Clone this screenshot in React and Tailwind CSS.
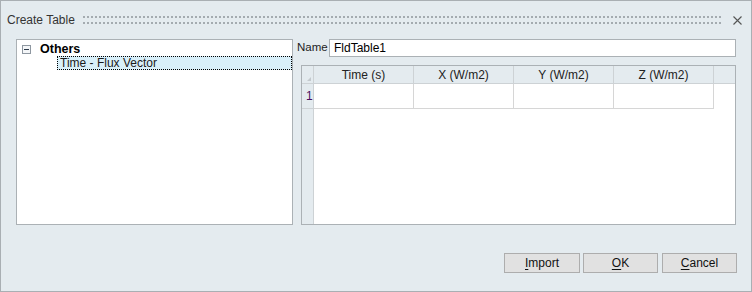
import React from "react";

const font = { fontFamily: '"Liberation Sans", Arial, sans-serif' };

const Btn = ({ mn, rest, w, ml }) => (
  <button
    className={`h-[20px] ${w} ${ml} border border-[#adadad] bg-[#e1e1e1] text-[12px] text-[#111] leading-none flex items-center justify-center`}
  >
    <span>
      <span className="underline underline-offset-2">{mn}</span>
      {rest}
    </span>
  </button>
);

const cols = ["Time (s)", "X (W/m2)", "Y (W/m2)", "Z (W/m2)"];

export default function App() {
  return (
    <div
      style={font}
      className="w-[752px] h-[292px] border border-[#a9afb3] bg-[#e4ebef] flex flex-col text-[12px] text-[#1a1a1a]"
    >
      {/* title bar */}
      <div className="h-[37px] flex items-center pl-[6px]">
        <span className="w-[76px] shrink-0 text-[#333] pt-[1px] whitespace-nowrap">Create Table</span>
        <svg className="shrink-0 mt-[1px]" width="640" height="8">
          <defs>
            <pattern id="dots" width="4" height="6" patternUnits="userSpaceOnUse">
              <rect x="0" y="0" width="2" height="2" fill="#a4abb0" />
            </pattern>
          </defs>
          <rect width="640" height="8" fill="url(#dots)" />
        </svg>
        <svg className="ml-[10px] shrink-0 mt-[1px]" width="9" height="9" viewBox="0 0 9 9">
          <path d="M0.5 0.5L8.5 8.5M8.5 0.5L0.5 8.5" stroke="#555" strokeWidth="1.1" />
        </svg>
      </div>

      {/* body */}
      <div className="flex h-[186px] mt-[1px] pl-[15px]">
        {/* tree */}
        <div className="w-[277px] h-full border border-[#abb1b5] bg-white">
          <div className="flex items-center h-[14px] mt-[2px] pl-[5px]">
            <div className="w-[9px] h-[9px] border border-[#8e97a0] bg-[#f4f6f8] flex items-center justify-center">
              <div className="w-[5px] h-[1px] bg-[#2c3a4a]" />
            </div>
            <span className="ml-[9px] font-bold text-[12.5px] text-black">Others</span>
          </div>
          <div className="ml-[40px] h-[14px] border border-dotted border-black bg-[#d9f0fa] flex items-center pl-[2px]">
            <span>Time - Flux Vector</span>
          </div>
        </div>

        {/* right */}
        <div className="ml-[4px] w-[439px] flex flex-col">
          <div className="flex items-center h-[18px]">
            <span className="w-[32px] shrink-0 text-[11.5px] text-[#222]">Name</span>
            <div className="flex-1 h-full border border-[#abb1b5] bg-white flex items-center pl-[4px] text-black">
              FldTable1
            </div>
          </div>

          <div className="mt-[8px] ml-[4px] w-[435px] h-[160px] border border-[#abb1b5] bg-white flex flex-col">
            <div className="flex h-[18px] bg-[#e4ebef] border-b border-[#cdd2d5]">
              <div className="w-[12px] border-r border-[#cdd2d5] relative">
                <svg className="absolute right-[2px] bottom-[2px]" width="4" height="4" viewBox="0 0 4 4">
                  <path d="M4 0L4 4L0 4Z" fill="#c3c9cd" />
                </svg>
              </div>
              {cols.map((c) => (
                <div key={c} className="w-[100px] border-r border-[#cdd2d5] flex items-center justify-center text-[#222]">
                  {c}
                </div>
              ))}
            </div>
            <div className="flex flex-1">
              <div className="w-[12px] bg-[#e4ebef] border-r border-[#cdd2d5] h-full">
                <div className="h-[25px] flex items-center pl-[4px] text-[#4a1060] border-b border-[#cdd2d5]">1</div>
              </div>
              {cols.map((c) => (
                <div key={c} className="w-[100px] h-[25px] border-r border-b border-[#d6d6d6]" />
              ))}
            </div>
          </div>
        </div>
      </div>

      {/* buttons */}
      <div className="flex justify-end mt-[28px] pr-[14px]">
        <Btn mn="I" rest="mport" w="w-[76px]" ml="" />
        <Btn mn="O" rest="K" w="w-[75px]" ml="ml-[3px]" />
        <Btn mn="C" rest="ancel" w="w-[75px]" ml="ml-[4px]" />
      </div>
    </div>
  );
}
